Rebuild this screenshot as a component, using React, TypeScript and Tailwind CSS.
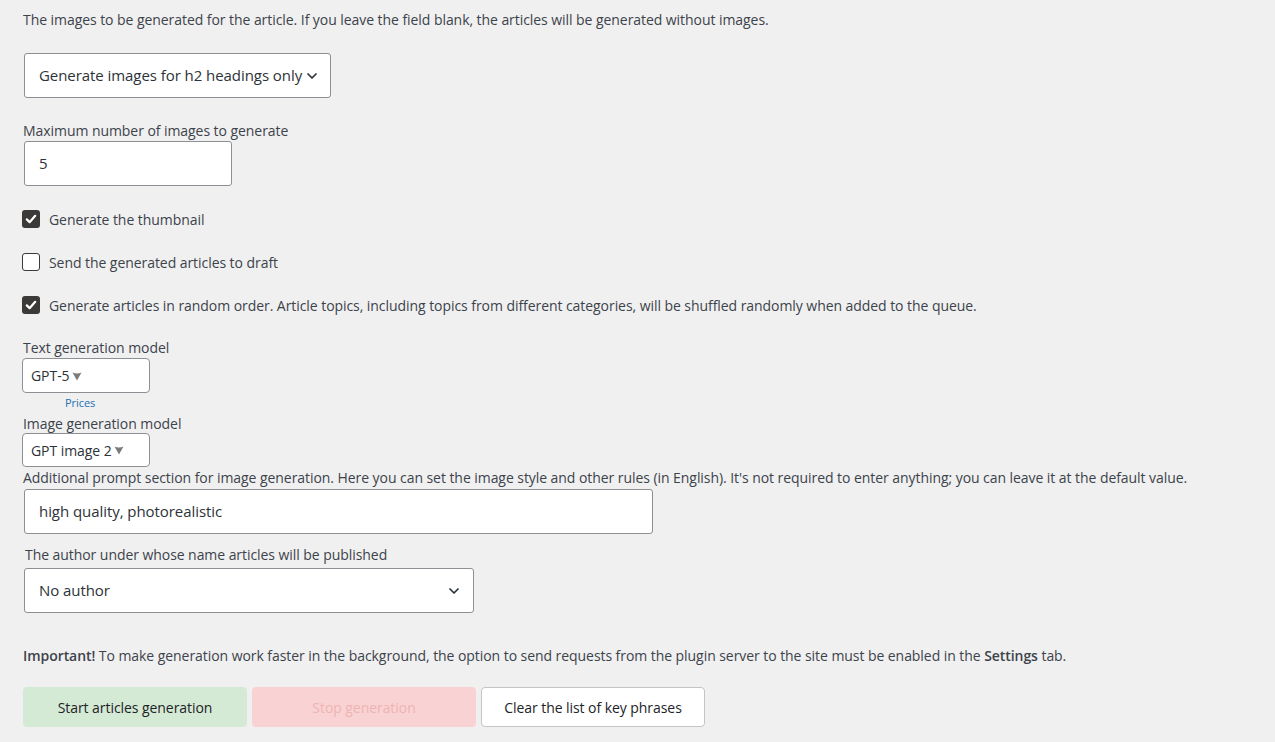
import React from "react";

const Chevron = ({ className = "" }: { className?: string }) => (
  <svg viewBox="0 0 20 20" className={className} fill="none" stroke="currentColor" strokeWidth="2.2" strokeLinecap="round" strokeLinejoin="round">
    <path d="M5 7.5l5 5 5-5" />
  </svg>
);

const Check = () => (
  <svg viewBox="0 0 20 20" className="w-[14px] h-[14px]" fill="none" stroke="white" strokeWidth="3.2" strokeLinecap="round" strokeLinejoin="round">
    <path d="M4 10.5l4 4 8-9" />
  </svg>
);

const Tri = () => (
  <svg viewBox="0 0 10 9" className="w-[10px] h-[9px] ml-[2px] mt-[1px]" fill="#7a7a7a">
    <path d="M0.5 0.5 Q5 2.5 9.5 0.5 L5 8.5 Z" />
  </svg>
);

const CheckRow = ({ checked, label }: { checked: boolean; label: string }) => (
  <div className="flex items-center h-[18px]">
    <div
      className={
        checked
          ? "w-[18px] h-[18px] rounded-[3px] bg-[#3c3a39] flex items-center justify-center"
          : "w-[18px] h-[18px] rounded-[3px] bg-white border border-[#3c3a39]"
      }
    >
      {checked && <Check />}
    </div>
    <span className="ml-[9px] text-[14px] text-[#3c434a]">{label}</span>
  </div>
);

export default function App() {
  return (
    <div
      className="min-h-[742px] bg-[#f0f0f1] text-[#3c434a] pl-[23px] pt-[10px] tracking-[-0.06px]"
      style={{ fontFamily: '"Open Sans", "Noto Sans", sans-serif' }}
    >
      <p className="text-[14px] leading-[20px]">
        The images to be generated for the article. If you leave the field blank, the articles will be generated without images.
      </p>

      <div className="mt-[23px] ml-[1px] w-[307px] h-[45px] bg-white border border-[#8c8f94] rounded-[3px] flex items-center pl-[14px] text-[15px] text-[#2c3338]">
        <span>Generate images for h2 headings only</span>
        <Chevron className="w-[16px] h-[16px] ml-[2px] text-[#2c3338]" />
      </div>

      <p className="mt-[24px] text-[14px] leading-[18px]">Maximum number of images to generate</p>
      <div className="mt-[1px] ml-[1px] w-[208px] h-[45px] bg-white border border-[#8c8f94] rounded-[3px] flex items-center pl-[14px] text-[15px] text-[#2c3338]">
        5
      </div>

      <div className="mt-[24px] flex flex-col gap-[25px] ml-[-1px]">
        <CheckRow checked label="Generate the thumbnail" />
        <CheckRow checked={false} label="Send the generated articles to draft" />
        <CheckRow
          checked
          label="Generate articles in random order. Article topics, including topics from different categories, will be shuffled randomly when added to the queue."
        />
      </div>

      <p className="mt-[25px] text-[14px] leading-[18px]">Text generation model</p>
      <div className="mt-[1px] ml-[-1px] w-[128px] h-[35px] bg-white border border-[#8c8f94] rounded-[4px] flex items-center pl-[8px] text-[14px] text-[#2c3338]">
        <span>GPT-5</span>
        <Tri />
      </div>
      <div className="ml-[42px] text-[11px] leading-[15px] text-[#2271b1] mt-[2px]">Prices</div>

      <p className="mt-[5px] text-[14px] leading-[18px]">Image generation model</p>
      <div className="mt-[0px] ml-[-1px] w-[128px] h-[34px] bg-white border border-[#8c8f94] rounded-[4px] flex items-center pl-[8px] text-[14px] text-[#2c3338]">
        <span>GPT image 2</span>
        <Tri />
      </div>

      <p className="mt-[2px] text-[14px] leading-[18px]">
        Additional prompt section for image generation. Here you can set the image style and other rules (in English). It's not required to enter anything; you can leave it at the default value.
      </p>
      <div className="mt-[2px] ml-[1px] w-[629px] h-[45px] bg-white border border-[#8c8f94] rounded-[3px] flex items-center pl-[14px] text-[15px] text-[#2c3338]">
        high quality, photorealistic
      </div>

      <p className="mt-[12px] ml-[2px] text-[14px] leading-[18px]">The author under whose name articles will be published</p>
      <div className="mt-[4px] ml-[1px] w-[450px] h-[45px] bg-white border border-[#8c8f94] rounded-[3px] flex items-center justify-between pl-[14px] pr-[11px] text-[15px] text-[#2c3338]">
        <span>No author</span>
        <Chevron className="w-[16px] h-[16px] text-[#2c3338]" />
      </div>

      <p className="mt-[33px] text-[14px] leading-[20px]">
        <b className="font-semibold">Important!</b> To make generation work faster in the background, the option to send requests from the plugin server to the site must be enabled in the <b className="font-semibold">Settings</b> tab.
      </p>

      <div className="mt-[21px] flex gap-[5px]">
        <button className="w-[224px] h-[40px] rounded-[4px] bg-[#d5ead5] text-[14px] text-[#1d2327]">
          Start articles generation
        </button>
        <button className="w-[224px] h-[40px] rounded-[4px] bg-[#f9d3d3] text-[14px] text-[#eeb3b3]">
          Stop generation
        </button>
        <button className="w-[224px] h-[40px] rounded-[4px] bg-white border border-[#c3c4c7] text-[14px] text-[#1d2327]">
          Clear the list of key phrases
        </button>
      </div>
    </div>
  );
}
